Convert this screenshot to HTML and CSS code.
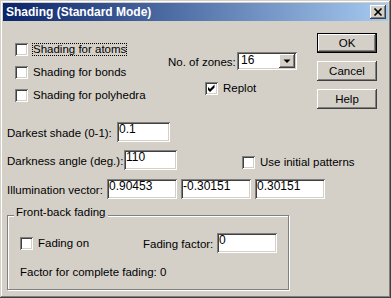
FILE: index.html
```html
<!DOCTYPE html>
<html>
<head>
<meta charset="utf-8">
<link rel="stylesheet" href="styles.css">
</head>
<body>
<div class="window">
  <div class="titlebar">
    <span class="title">Shading (Standard Mode)</span>
    <span class="close-btn"><svg width="16" height="14" viewBox="0 0 16 14"><path d="M4.5 3.5 L11.5 10.5 M11.5 3.5 L4.5 10.5" stroke="#000" stroke-width="1.7" fill="none"/></svg></span>
  </div>
  <div class="content">
    <div class="top">
      <div class="checks">
        <div class="check"><span class="box"></span><span class="focus">Shading for atoms</span></div>
        <div class="check"><span class="box"></span><span>Shading for bonds</span></div>
        <div class="check"><span class="box"></span><span>Shading for polyhedra</span></div>
      </div>
      <div class="mid">
        <div class="zones">
          <span class="zones-label">No. of zones:</span>
          <div class="combo">
            <span class="combo-val">16</span>
            <span class="combo-btn"><svg width="12" height="10" viewBox="0 0 12 10"><path d="M2.5 3.5 H9.5 L6 7Z" fill="#000"/></svg></span>
          </div>
        </div>
        <div class="check replot"><span class="box"><svg width="13" height="13" viewBox="0 0 13 13"><path d="M3 5 L5 7 L9.5 2.5 L9.5 5.5 L5 10 L3 8Z" fill="#000"/></svg></span><span>Replot</span></div>
      </div>
      <div class="buttons">
        <div class="btn default">OK</div>
        <div class="btn">Cancel</div>
        <div class="btn">Help</div>
      </div>
    </div>

    <div class="row row1">
      <span class="lbl w110">Darkest shade (0-1):</span>
      <div class="input w53">0.1</div>
    </div>
    <div class="row row2">
      <span class="lbl w117">Darkness angle (deg.):</span>
      <div class="input w53">110</div>
      <div class="check initial"><span class="box"></span><span>Use initial patterns</span></div>
    </div>
    <div class="row row3">
      <span class="lbl w100">Illumination vector:</span>
      <div class="input w70">0.90453</div>
      <div class="input w70">-0.30151</div>
      <div class="input w70">0.30151</div>
    </div>

    <div class="group">
      <span class="legend">Front-back fading</span>
      <div class="fade-row">
        <div class="check fade-on"><span class="box"></span><span>Fading on</span></div>
        <span class="lbl w74">Fading factor:</span>
        <div class="input w60">0</div>
      </div>
      <div class="complete">Factor for complete fading: 0</div>
    </div>
  </div>
</div>
</body>
</html>
```

FILE: styles.css
```css
body {
  margin: 0;
  font-family: "Liberation Sans", Arial, sans-serif;
  font-size: 11.5px;
  color: #000;
  background: #d4d0c8;
}

.window {
  width: 391px;
  height: 298px;
  box-sizing: border-box;
  padding: 3px;
  background: #d4d0c8;
  box-shadow: inset -1px -1px #404040, inset 1px 1px #d4d0c8,
              inset -2px -2px #808080, inset 2px 2px #ffffff;
}

.titlebar {
  height: 18px;
  display: flex;
  align-items: center;
  padding-left: 3px;
  background: linear-gradient(to right, #0a246a, #a6caf0);
}

.title {
  flex: 1;
  color: #fff;
  font-weight: bold;
  font-size: 12px;
  line-height: 18px;
  white-space: nowrap;
}

.close-btn {
  width: 16px;
  height: 14px;
  margin-right: 2px;
  background: #d4d0c8;
  box-shadow: inset -1px -1px #404040, inset 1px 1px #ffffff,
              inset -2px -2px #808080, inset 2px 2px #d4d0c8;
  display: flex;
}

/* top area */
.top {
  display: flex;
  height: 101px;
}

.checks {
  margin-left: 12px;
  width: 153px;
  padding-top: 22px;
  display: flex;
  flex-direction: column;
  gap: 10px;
}

.check {
  display: flex;
  align-items: center;
  gap: 5px;
  height: 13px;
  line-height: 13px;
  white-space: nowrap;
}

.box {
  flex: none;
  width: 13px;
  height: 13px;
  background: #fff;
  box-shadow: inset 1px 1px #808080, inset -1px -1px #ffffff,
              inset 2px 2px #404040, inset -2px -2px #d4d0c8;
  display: flex;
}

.focus {
  padding: 0 1px;
  margin-left: -1px;
  outline: 1px dotted #000;
  outline-offset: -1px;
}

.mid {
  width: 149px;
  padding-top: 31px;
}

.zones {
  display: flex;
  align-items: flex-start;
  height: 18px;
}

.zones-label {
  width: 69px;
  padding-top: 3px;
  line-height: 14px;
  white-space: nowrap;
}

.combo {
  width: 60px;
  height: 18px;
  box-sizing: border-box;
  background: #fff;
  box-shadow: inset 1px 1px #808080, inset -1px -1px #ffffff,
              inset 2px 2px #404040, inset -2px -2px #d4d0c8;
  display: flex;
  align-items: flex-start;
}

.combo-val {
  flex: 1;
  padding: 1px 0 0 4px;
  line-height: 14px;
  font-size: 12px;
}

.combo-btn {
  width: 16px;
  height: 14px;
  margin: 2px 2px 0 0;
  background: #d4d0c8;
  box-shadow: inset -1px -1px #404040, inset 1px 1px #ffffff,
              inset -2px -2px #808080, inset 2px 2px #d4d0c8;
  display: flex;
  align-items: center;
  justify-content: center;
}

.replot {
  margin-top: 12px;
  margin-left: 37px;
}

.buttons {
  padding-top: 12px;
  display: flex;
  flex-direction: column;
  gap: 8px;
}

.btn {
  width: 60px;
  height: 20px;
  box-sizing: border-box;
  display: flex;
  align-items: center;
  justify-content: center;
  box-shadow: inset -1px -1px #404040, inset 1px 1px #ffffff,
              inset -2px -2px #808080, inset 2px 2px #d4d0c8;
}

.btn.default {
  box-shadow: inset 0 0 0 1px #000,
              inset -2px -2px #404040, inset 2px 2px #ffffff,
              inset -3px -3px #808080;
}

/* rows */
.row {
  display: flex;
  align-items: flex-start;
  height: 20px;
  padding-left: 4px;
}

.row1 { margin-bottom: 8px; }
.row2 { margin-bottom: 9px; }

.lbl {
  padding-top: 4px;
  line-height: 14px;
  white-space: nowrap;
}

.w74 { width: 74px; }
.w100 { width: 100px; }
.w110 { width: 110px; }
.w117 { width: 117px; }

.input {
  height: 20px;
  box-sizing: border-box;
  padding: 1px 2px 0;
  line-height: 13px;
  font-size: 12px;
  background: #fff;
  box-shadow: inset 1px 1px #808080, inset -1px -1px #ffffff,
              inset 2px 2px #404040, inset -2px -2px #d4d0c8;
  white-space: nowrap;
  overflow: hidden;
}

.w53 { width: 53px; }
.w60 { width: 60px; }
.w70 { width: 70px; margin-right: 4px; }

.initial {
  margin-left: 65px;
  margin-top: 6px;
}

/* group box */
.group {
  position: relative;
  margin: 16px 0 0 4px;
  width: 282px;
  height: 75px;
  box-sizing: border-box;
  border: 1px solid #808080;
  box-shadow: inset 1px 1px #ffffff, 1px 1px #ffffff;
}

.legend {
  position: absolute;
  top: -11px;
  left: 6px;
  padding: 0 2px;
  line-height: 14px;
  background: #d4d0c8;
  white-space: nowrap;
}

.fade-row {
  display: flex;
  align-items: flex-start;
  margin-top: 17px;
  padding-left: 12px;
  height: 20px;
}

.fade-on {
  width: 123px;
  margin-top: 4px;
}

.complete {
  margin-top: 12px;
  padding-left: 12px;
  line-height: 14px;
}
```
